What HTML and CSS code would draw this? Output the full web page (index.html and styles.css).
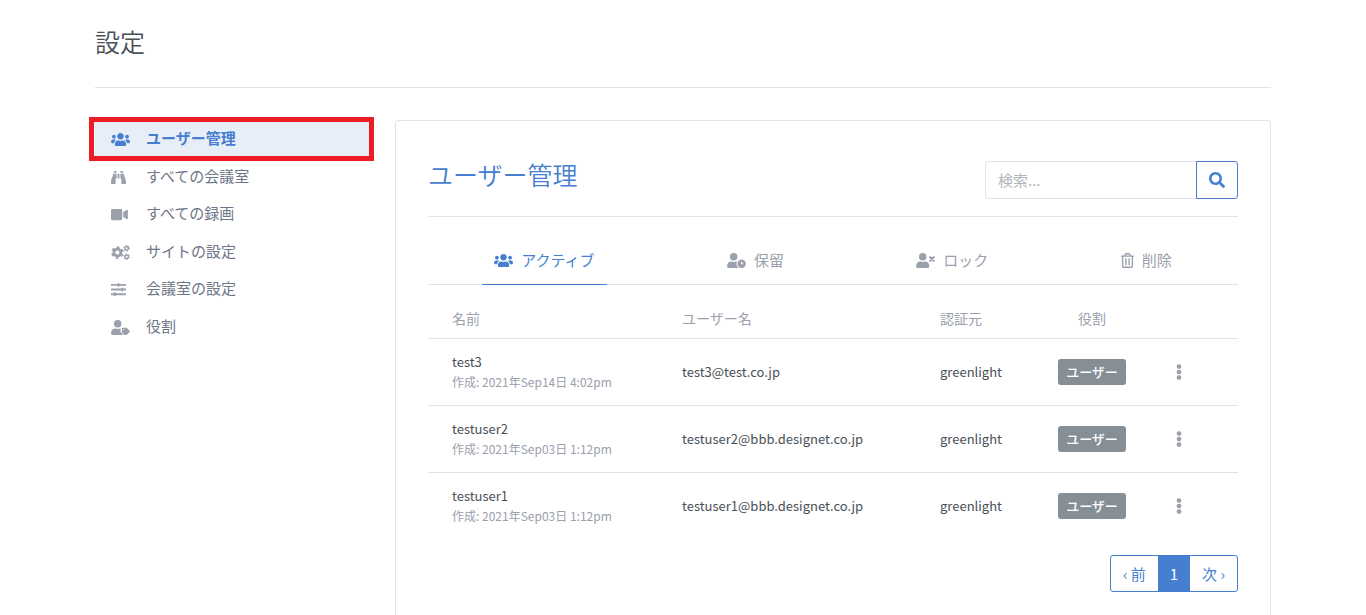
FILE: index.html
```html
<!DOCTYPE html>
<html lang="ja">
<head>
<meta charset="utf-8">
<meta name="viewport" content="width=device-width, initial-scale=1">
<title>設定</title>
<link rel="stylesheet" href="styles.css">
</head>
<body>
<svg class="sprite" aria-hidden="true">
  <symbol id="users" viewBox="0 0 640 512"><path d="M96 224c35.3 0 64-28.7 64-64s-28.7-64-64-64-64 28.7-64 64 28.7 64 64 64zm448 0c35.3 0 64-28.7 64-64s-28.7-64-64-64-64 28.7-64 64 28.7 64 64 64zm32 32h-64c-17.6 0-33.5 7.1-45.1 18.6 40.3 22.1 68.9 62 75.1 109.4h66c17.7 0 32-14.3 32-32v-32c0-35.3-28.7-64-64-64zm-256 0c61.9 0 112-50.1 112-112S381.9 32 320 32 208 82.1 208 144s50.1 112 112 112zm76.8 32h-8.3c-20.8 10-43.9 16-68.5 16s-47.6-6-68.5-16h-8.3C179.6 288 128 339.6 128 403.2V432c0 26.5 21.5 48 48 48h288c26.5 0 48-21.5 48-48v-28.8c0-63.6-51.6-115.2-115.2-115.2zm-223.7-13.4C161.5 263.1 145.6 256 128 256H64c-35.3 0-64 28.7-64 64v32c0 17.7 14.3 32 32 32h65.9c6.3-47.4 34.9-87.3 75.2-109.4z"/></symbol>
  <symbol id="binoculars" viewBox="0 0 512 512" preserveAspectRatio="xMinYMid"><path d="M416 48c0-8.84-7.16-16-16-16h-64c-8.84 0-16 7.16-16 16v48h96V48zM63.91 159.99C61.4 253.84 3.46 274.22 0 404v44c0 17.67 14.33 32 32 32h96c17.67 0 32-14.33 32-32V288h32V128H95.84c-17.63 0-31.45 14.37-31.93 31.99zm384.18 0c-.48-17.62-14.3-31.99-31.93-31.99H320v160h32v160c0 17.67 14.33 32 32 32h96c17.67 0 32-14.33 32-32v-44c-3.46-129.78-61.4-150.16-63.91-244.01zM176 32h-64c-8.84 0-16 7.16-16 16v48h96V48c0-8.84-7.16-16-16-16zm48 256h64V128h-64v160z"/></symbol>
  <symbol id="video" viewBox="0 0 576 512" preserveAspectRatio="xMinYMid"><path d="M336.2 64H47.8C21.4 64 0 85.4 0 111.8v288.4C0 426.6 21.4 448 47.8 448h288.4c26.4 0 47.8-21.4 47.8-47.8V111.8c0-26.4-21.4-47.8-47.8-47.8zm189.4 37.7L416 177.3v157.4l109.6 75.5c21.2 14.6 50.4-.3 50.4-25.8V127.5c0-25.4-29.1-40.4-50.4-25.8z"/></symbol>
  <symbol id="cogs" viewBox="0 0 640 512">
    <g fill="none" stroke="currentColor">
      <circle cx="214" cy="256" r="118" stroke-width="92"/>
      <circle cx="214" cy="256" r="184" stroke-width="60" stroke-dasharray="96 96.68" stroke-dashoffset="-48"/>
      <circle cx="528" cy="112" r="60" stroke-width="48"/>
      <circle cx="528" cy="112" r="94" stroke-width="36" stroke-dasharray="50 48.4"/>
      <circle cx="528" cy="400" r="60" stroke-width="48"/>
      <circle cx="528" cy="400" r="94" stroke-width="36" stroke-dasharray="50 48.4"/>
    </g>
  </symbol>
  <symbol id="sliders" viewBox="0 0 512 512" preserveAspectRatio="xMinYMid"><path d="M0 64h224V48c0-9 7-16 16-16h32c9 0 16 7 16 16v16h224v64H288v16c0 9-7 16-16 16h-32c-9 0-16-7-16-16v-16H0zM0 224h352v-16c0-9 7-16 16-16h32c9 0 16 7 16 16v16h96v64h-96v16c0 9-7 16-16 16h-32c-9 0-16-7-16-16v-16H0zM0 384h96v-16c0-9 7-16 16-16h32c9 0 16 7 16 16v16h352v64H160v16c0 9-7 16-16 16h-32c-9 0-16-7-16-16v-16H0z"/></symbol>
  <symbol id="user-tag" viewBox="0 0 640 512"><circle cx="224" cy="128" r="128"/><path d="M314 288h-17c-22 10-47 16-73 16s-51-6-73-16h-17C60 288 0 348 0 422v42c0 26 21 48 48 48h352l16-4-78-79c-12-12-18-28-18-45v-95zM630 365L540 274c-6-6-15-10-24-10H401c-19 0-33 15-33 34v115c0 9 4 18 10 24l90 91c13 13 34 13 48 0l114-115c13-13 13-35 0-48zM431 353a25 25 0 1 1 0-50 25 25 0 0 1 0 50z"/></symbol>
  <symbol id="user-clock" viewBox="0 0 640 512"><circle cx="224" cy="128" r="128"/><path d="M320 368c0-28 8-55 21-78-9-1-18-2-27-2h-17c-22 10-47 16-73 16s-51-6-73-16h-17C60 288 0 348 0 422v42c0 26 21 48 48 48h347c-45-32-75-84-75-144z"/><path fill-rule="evenodd" d="M496 224a144 144 0 1 0 0 288 144 144 0 0 0 0-288zm-22 64h32v66h50v32h-82z"/></symbol>
  <symbol id="user-times" viewBox="0 0 640 512"><circle cx="224" cy="128" r="128"/><path d="M314 288h-17c-22 10-47 16-73 16s-51-6-73-16h-17C60 288 0 348 0 422v42c0 26 21 48 48 48h352c27 0 48-22 48-48v-42c0-74-60-134-134-134z"/><path d="M480 144l120 120M600 144L480 264" fill="none" stroke="currentColor" stroke-width="72" stroke-linecap="round"/></symbol>
  <symbol id="trash" viewBox="0 0 448 512"><path d="M268 416h24a12 12 0 0 0 12-12V188a12 12 0 0 0-12-12h-24a12 12 0 0 0-12 12v216a12 12 0 0 0 12 12zM432 80h-82.4l-34-56.7A48 48 0 0 0 274.4 0H173.6a48 48 0 0 0-41.2 23.3L98.4 80H16A16 16 0 0 0 0 96v16a16 16 0 0 0 16 16h16v336a48 48 0 0 0 48 48h288a48 48 0 0 0 48-48V128h16a16 16 0 0 0 16-16V96a16 16 0 0 0-16-16zM171.800 50.900A6 6 0 0 1 177 48h94a6 6 0 0 1 5.200 2.900L293.600 80H154.400zM368 464H80V128h288zm-212-48h24a12 12 0 0 0 12-12V188a12 12 0 0 0-12-12h-24a12 12 0 0 0-12 12v216a12 12 0 0 0 12 12z"/></symbol>
  <symbol id="search" viewBox="0 0 512 512"><path d="M505 442.700L405.300 343c-4.500-4.500-10.600-7-17-7H372c27.600-35.300 44-79.700 44-128C416 93.100 322.900 0 208 0S0 93.100 0 208s93.100 208 208 208c48.300 0 92.700-16.400 128-44v16.300c0 6.400 2.500 12.500 7 17l99.700 99.700c9.400 9.400 24.600 9.400 33.900 0l28.300-28.300c9.400-9.400 9.400-24.600.1-34zM208 336c-70.700 0-128-57.200-128-128 0-70.700 57.200-128 128-128 70.700 0 128 57.200 128 128 0 70.700-57.200 128-128 128z"/></symbol>
  <symbol id="dots" viewBox="0 0 192 512"><circle cx="96" cy="80" r="76"/><circle cx="96" cy="256" r="76"/><circle cx="96" cy="432" r="76"/></symbol>
</svg>

<main class="container">
  <header class="page-header"><h1 class="page-title">設定</h1></header>
  <div class="layout">
    <nav class="side-nav" aria-label="設定">
      <a class="side-link active" href="#users-panel"><svg class="icon"><use href="#users"/></svg>ユーザー管理</a>
      <a class="side-link" href="#rooms"><svg class="icon"><use href="#binoculars"/></svg>すべての会議室</a>
      <a class="side-link" href="#recordings"><svg class="icon"><use href="#video"/></svg>すべての録画</a>
      <a class="side-link" href="#site"><svg class="icon"><use href="#cogs"/></svg>サイトの設定</a>
      <a class="side-link" href="#room-settings"><svg class="icon"><use href="#sliders"/></svg>会議室の設定</a>
      <a class="side-link" href="#roles"><svg class="icon"><use href="#user-tag"/></svg>役割</a>
    </nav>

    <section class="card" id="users-panel">
      <div class="card-head">
        <h2 class="card-title">ユーザー管理</h2>
        <form class="search" role="search">
          <input class="search-input" type="search" placeholder="検索..." aria-label="検索">
          <button class="search-button" type="button" aria-label="検索"><svg class="icon-search"><use href="#search"/></svg></button>
        </form>
      </div>

      <nav class="tabs" aria-label="状態">
        <a class="tab active" href="#active"><svg class="icon"><use href="#users"/></svg>アクティブ</a>
        <a class="tab" href="#pending"><svg class="icon"><use href="#user-clock"/></svg>保留</a>
        <a class="tab" href="#locked"><svg class="icon"><use href="#user-times"/></svg>ロック</a>
        <a class="tab" href="#deleted"><svg class="icon icon-narrow"><use href="#trash"/></svg>削除</a>
      </nav>

      <table class="users">
        <colgroup><col class="col-name"><col class="col-user"><col class="col-auth"><col class="col-role"><col class="col-menu"></colgroup>
        <thead>
          <tr><th>名前</th><th>ユーザー名</th><th>認証元</th><th class="center">役割</th><td></td></tr>
        </thead>
        <tbody>
          <tr>
            <td><div class="name">test3</div><div class="created">作成: 2021年Sep14日 4:02pm</div></td>
            <td>test3@test.co.jp</td><td>greenlight</td>
            <td class="center"><span class="badge">ユーザー</span></td>
            <td><button class="menu" type="button" aria-label="メニュー"><svg class="icon-dots"><use href="#dots"/></svg></button></td>
          </tr>
          <tr>
            <td><div class="name">testuser2</div><div class="created">作成: 2021年Sep03日 1:12pm</div></td>
            <td>testuser2@bbb.designet.co.jp</td><td>greenlight</td>
            <td class="center"><span class="badge">ユーザー</span></td>
            <td><button class="menu" type="button" aria-label="メニュー"><svg class="icon-dots"><use href="#dots"/></svg></button></td>
          </tr>
          <tr>
            <td><div class="name">testuser1</div><div class="created">作成: 2021年Sep03日 1:12pm</div></td>
            <td>testuser1@bbb.designet.co.jp</td><td>greenlight</td>
            <td class="center"><span class="badge">ユーザー</span></td>
            <td><button class="menu" type="button" aria-label="メニュー"><svg class="icon-dots"><use href="#dots"/></svg></button></td>
          </tr>
        </tbody>
      </table>

      <nav class="pagination" aria-label="ページ">
        <a class="page" href="#prev">‹ 前</a>
        <a class="page current" href="#1" aria-current="page">1</a>
        <a class="page" href="#next">次 ›</a>
      </nav>
    </section>
  </div>
</main>
</body>
</html>
```
FILE: styles.css
```css
:root {
  --blue: #467fcf;
  --text: #495057;
  --muted: #9aa0ac;
  --line: #dee2e6;
  --border: #e0e5ec;
}

* { box-sizing: border-box; }

body {
  margin: 0;
  background: #fff;
  color: var(--text);
  font-family: "Noto Sans CJK JP", "Noto Sans", sans-serif;
  font-size: 15px;
  font-weight: 400;
  line-height: 1.5;
}

a { color: inherit; text-decoration: none; }
svg { fill: currentColor; flex: none; }
.sprite { display: none; }

.container {
  max-width: 1200px;
  margin: 0 auto;
  padding: 0 12px;
}

.page-header {
  padding: 22px 0 26px;
  border-bottom: 1px solid var(--line);
}

.page-title, .card-title {
  margin: 0;
  font-size: 25px;
  font-weight: 350;
  line-height: 39px;
}

.layout {
  display: grid;
  grid-template-columns: minmax(0, 276fr) minmax(0, 876fr);
  gap: 24px;
  padding-top: 32px;
  align-items: start;
}

.side-nav { display: flex; flex-direction: column; }

.side-link {
  display: flex;
  align-items: center;
  gap: 16px;
  padding: 7px 16px 8px;
  color: #6e7687;
}

.icon { width: 19px; height: 15px; color: var(--muted); }
.side-link .icon { margin-top: 3px; overflow: visible; }
.icon-narrow { width: 13px; }
.active .icon { color: var(--blue); }

.side-link.active {
  position: relative;
  background: #e8eef8;
  color: var(--blue);
  font-weight: 700;
}

/* Highlight frame around the selected entry */
.side-link.active::after {
  content: "";
  position: absolute;
  inset: -3px -3px -3px -6px;
  border: 5px solid #ed1c24;
}

.card {
  padding: 32px;
  border: 1px solid var(--border);
  border-radius: 3px;
}

.card-head {
  display: flex;
  justify-content: space-between;
  align-items: flex-start;
  padding-bottom: 17px;
  border-bottom: 1px solid var(--border);
}

.card-title { color: var(--blue); line-height: 42px; }
.search { display: flex; height: 38px; margin-top: 8px; }

.search-input {
  width: 211px;
  padding: 0 12px;
  border: 1px solid var(--border);
  border-right: 0;
  border-radius: 3px 0 0 3px;
  background: #fff;
  color: var(--text);
  font: inherit;
}

.search-input::placeholder { color: #adb5bd; opacity: 1; }

.search-button {
  display: flex;
  align-items: center;
  justify-content: center;
  width: 42px;
  padding: 0;
  border: 1px solid var(--blue);
  border-radius: 0 3px 3px 0;
  background: #fff;
  color: var(--blue);
}

.icon-search { width: 16px; height: 16px; }

.tabs {
  display: flex;
  justify-content: space-around;
  padding-top: 18px;
  border-bottom: 1px solid var(--line);
}

.tab {
  display: flex;
  align-items: center;
  gap: 8px;
  margin-bottom: -1px;
  padding: 14px 12px 12px;
  border-bottom: 1px solid transparent;
  color: var(--muted);
}

.tab.active { border-color: var(--blue); color: var(--blue); }

.users {
  width: 100%;
  border-collapse: collapse;
  table-layout: fixed;
  font-size: 14px;
}

.col-name { width: 242px; }
.col-user { width: 258px; }
.col-auth { width: 118px; }
.col-role { width: 92px; }
.col-menu { width: 100px; }

.users th, .users td { padding: 12px; text-align: left; }
.users th:first-child, .users td:first-child { padding-left: 24px; }
.users .center { text-align: center; }
.users th { padding: 23px 12px 9px; color: var(--muted); font-weight: 400; }
.users tbody tr { height: 67px; border-top: 1px solid var(--line); }
.users tbody td { font-size: 13px; }
.name { line-height: 21px; }
.created { color: var(--muted); font-size: 12px; line-height: 20px; }

.badge {
  display: inline-block;
  padding: 0 8px;
  border-radius: 3px;
  background: #868e96;
  color: #fff;
  line-height: 26px;
  font-weight: 500;
  white-space: nowrap;
}

.menu {
  display: flex;
  align-items: center;
  justify-content: center;
  width: 30px;
  height: 30px;
  margin-left: 14px;
  padding: 0;
  border: 0;
  background: none;
  color: var(--muted);
}

.icon-dots { width: 6px; height: 16px; }

.pagination {
  display: flex;
  width: fit-content;
  margin: 16px 0 0 auto;
  border: 1px solid var(--blue);
  border-radius: 3px;
  color: var(--blue);
}

.page { padding: 6px 12px; line-height: 23px; }
.page.current { background: var(--blue); color: #fff; }
```
